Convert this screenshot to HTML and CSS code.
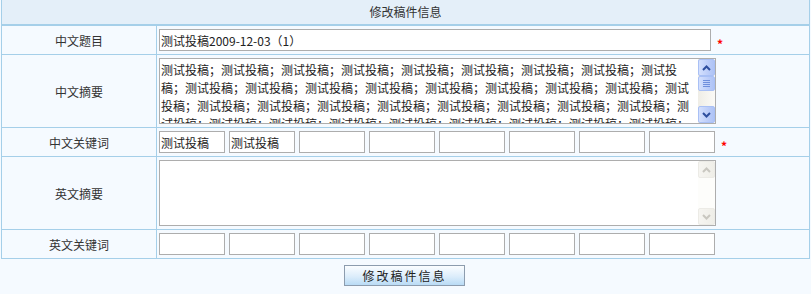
FILE: index.html
```html
<!DOCTYPE html>
<html lang="zh-CN">
<head>
  <meta charset="UTF-8">
  <title>修改稿件信息</title>
  <link rel="stylesheet" href="styles.css">
</head>
<body>

  <div class="edit-box">
    <!-- Title -->
    <div class="box-title">修改稿件信息</div>

    <!-- 中文题目 -->
    <div class="row">
      <div class="row-label">中文题目</div>
      <div class="row-field">
        <input type="text" class="txt-title" value="测试投稿2009-12-03（1）">
        <span class="req">*</span>
      </div>
    </div>

    <!-- 中文摘要 -->
    <div class="row tall">
      <div class="row-label">中文摘要</div>
      <div class="row-field">
        <div class="area">
          <textarea class="area-text">测试投稿；测试投稿；测试投稿；测试投稿；测试投稿；测试投稿；测试投稿；测试投稿；测试投稿；测试投稿；测试投稿；测试投稿；测试投稿；测试投稿；测试投稿；测试投稿；测试投稿；测试投稿；测试投稿；测试投稿；测试投稿；测试投稿；测试投稿；测试投稿；测试投稿；测试投稿；测试投稿；测试投稿；测试投稿；测试投稿；测试投稿；测试投稿；测试投稿；测试投稿；测试投稿；测试投稿；测试投稿；测试投稿；测试投稿；测试投稿；</textarea>
          <div class="vscroll">
            <span class="vs-btn">
              <svg width="9" height="6" viewBox="0 0 9 6"><path d="M1 5 L4.5 1.5 L8 5" fill="none" stroke="#2f4f9e" stroke-width="2"/></svg>
            </span>
            <span class="vs-track">
              <span class="vs-thumb">
                <svg width="7" height="7" viewBox="0 0 7 7"><path d="M0 0.5H7M0 2.5H7M0 4.5H7M0 6.5H7" stroke="#6f8fdc" stroke-width="1"/></svg>
              </span>
            </span>
            <span class="vs-btn">
              <svg width="9" height="6" viewBox="0 0 9 6"><path d="M1 1 L4.5 4.5 L8 1" fill="none" stroke="#2f4f9e" stroke-width="2"/></svg>
            </span>
          </div>
        </div>
      </div>
    </div>

    <!-- 中文关键词 -->
    <div class="row">
      <div class="row-label">中文关键词</div>
      <div class="row-field">
        <div class="kw-list">
          <input type="text" class="txt-kw" value="测试投稿">
          <input type="text" class="txt-kw" value="测试投稿">
          <input type="text" class="txt-kw">
          <input type="text" class="txt-kw">
          <input type="text" class="txt-kw">
          <input type="text" class="txt-kw">
          <input type="text" class="txt-kw">
          <input type="text" class="txt-kw">
        </div>
        <span class="req">*</span>
      </div>
    </div>

    <!-- 英文摘要 -->
    <div class="row tall">
      <div class="row-label">英文摘要</div>
      <div class="row-field">
        <div class="area">
          <textarea class="area-text"></textarea>
          <div class="vscroll off">
            <span class="vs-btn">
              <svg width="9" height="6" viewBox="0 0 9 6"><path d="M1 5 L4.5 1.5 L8 5" fill="none" stroke="#c9c7c0" stroke-width="2"/></svg>
            </span>
            <span class="vs-track"></span>
            <span class="vs-btn">
              <svg width="9" height="6" viewBox="0 0 9 6"><path d="M1 1 L4.5 4.5 L8 1" fill="none" stroke="#c9c7c0" stroke-width="2"/></svg>
            </span>
          </div>
        </div>
      </div>
    </div>

    <!-- 英文关键词 -->
    <div class="row">
      <div class="row-label">英文关键词</div>
      <div class="row-field">
        <div class="kw-list">
          <input type="text" class="txt-kw">
          <input type="text" class="txt-kw">
          <input type="text" class="txt-kw">
          <input type="text" class="txt-kw">
          <input type="text" class="txt-kw">
          <input type="text" class="txt-kw">
          <input type="text" class="txt-kw">
          <input type="text" class="txt-kw">
        </div>
      </div>
    </div>
  </div>

  <!-- Submit -->
  <div class="actions">
    <button type="button" class="btn-save">修改稿件信息</button>
  </div>

</body>
</html>
```

FILE: styles.css
```css
/* General */
body {
  margin: 0;
  background-color: #f5faff;
  font-family: "Noto Sans CJK TC", "Noto Sans CJK SC", sans-serif;
  font-size: 12px;
  color: #333;
}

/* Box */
.edit-box {
  width: 807px;
  margin-left: 1px;
  border-left: 1px solid #a5cfe9;
  border-right: 1px solid #a5cfe9;
}

.box-title {
  height: 24px;
  line-height: 24px;
  text-align: center;
  background-color: #e4eff9;
  border-bottom: 2px solid #a5cfe9;
}

/* Rows */
.row {
  display: flex;
  height: 28px;
  border-bottom: 1px solid #a5cfe9;
}

.row.tall {
  height: 72px;
}

.row-label {
  width: 154px;
  border-right: 1px solid #a5cfe9;
  display: flex;
  align-items: center;
  justify-content: center;
}

.row-field {
  flex: 1;
  display: flex;
  align-items: center;
  padding-left: 2px;
}

/* Inputs */
.row-field input {
  box-sizing: border-box;
  height: 22px;
  padding: 0 1px;
  border: 1px solid #adadad;
  background-color: #fff;
  font-family: inherit;
  font-size: 12px;
  color: #222;
  outline: none;
}

.txt-title {
  width: 552px;
}

.kw-list {
  display: flex;
  gap: 4px;
}

.txt-kw {
  width: 66px;
}

.req {
  color: #f00;
  margin-left: 6px;
  padding-top: 6px;
  font-size: 12px;
  font-weight: bold;
}

/* Textarea with scrollbar */
.area {
  box-sizing: border-box;
  width: 557px;
  height: 66px;
  display: flex;
  border: 1px solid #adadad;
  background-color: #fff;
}

.area-text {
  flex: 1;
  margin: 0;
  padding: 2px 1px 0;
  border: none;
  resize: none;
  overflow: hidden;
  outline: none;
  font-family: inherit;
  font-size: 12px;
  line-height: 18px;
  color: #222;
}

.vscroll {
  width: 17px;
  display: flex;
  flex-direction: column;
  background: linear-gradient(to right, #efede6, #fbfaf7);
}

.vs-btn,
.vs-thumb {
  box-sizing: border-box;
  height: 17px;
  display: flex;
  align-items: center;
  justify-content: center;
  border: 1px solid #a9c0f5;
  border-radius: 2px;
  background: linear-gradient(to right, #d4e0fd, #bccdf9 60%, #aec3f6);
}

.vs-thumb {
  height: 15px;
}

.vs-track {
  flex: 1;
  display: flex;
  flex-direction: column;
}

.vscroll.off {
  background: #fdfdfb;
}

.vscroll.off .vs-btn {
  border-color: #ecebe6;
  background: linear-gradient(to right, #f6f5f1, #efeee8);
}

/* Button */
.actions {
  width: 809px;
  display: flex;
  justify-content: center;
  padding-top: 6px;
}

.btn-save {
  box-sizing: border-box;
  width: 121px;
  height: 21px;
  padding: 0;
  border: 1px solid #8c9cae;
  background: linear-gradient(#fbfdff, #dcedfb 55%, #b9dbf5);
  font-family: inherit;
  font-size: 12px;
  letter-spacing: 2px;
  color: #222;
  cursor: pointer;
}
```
